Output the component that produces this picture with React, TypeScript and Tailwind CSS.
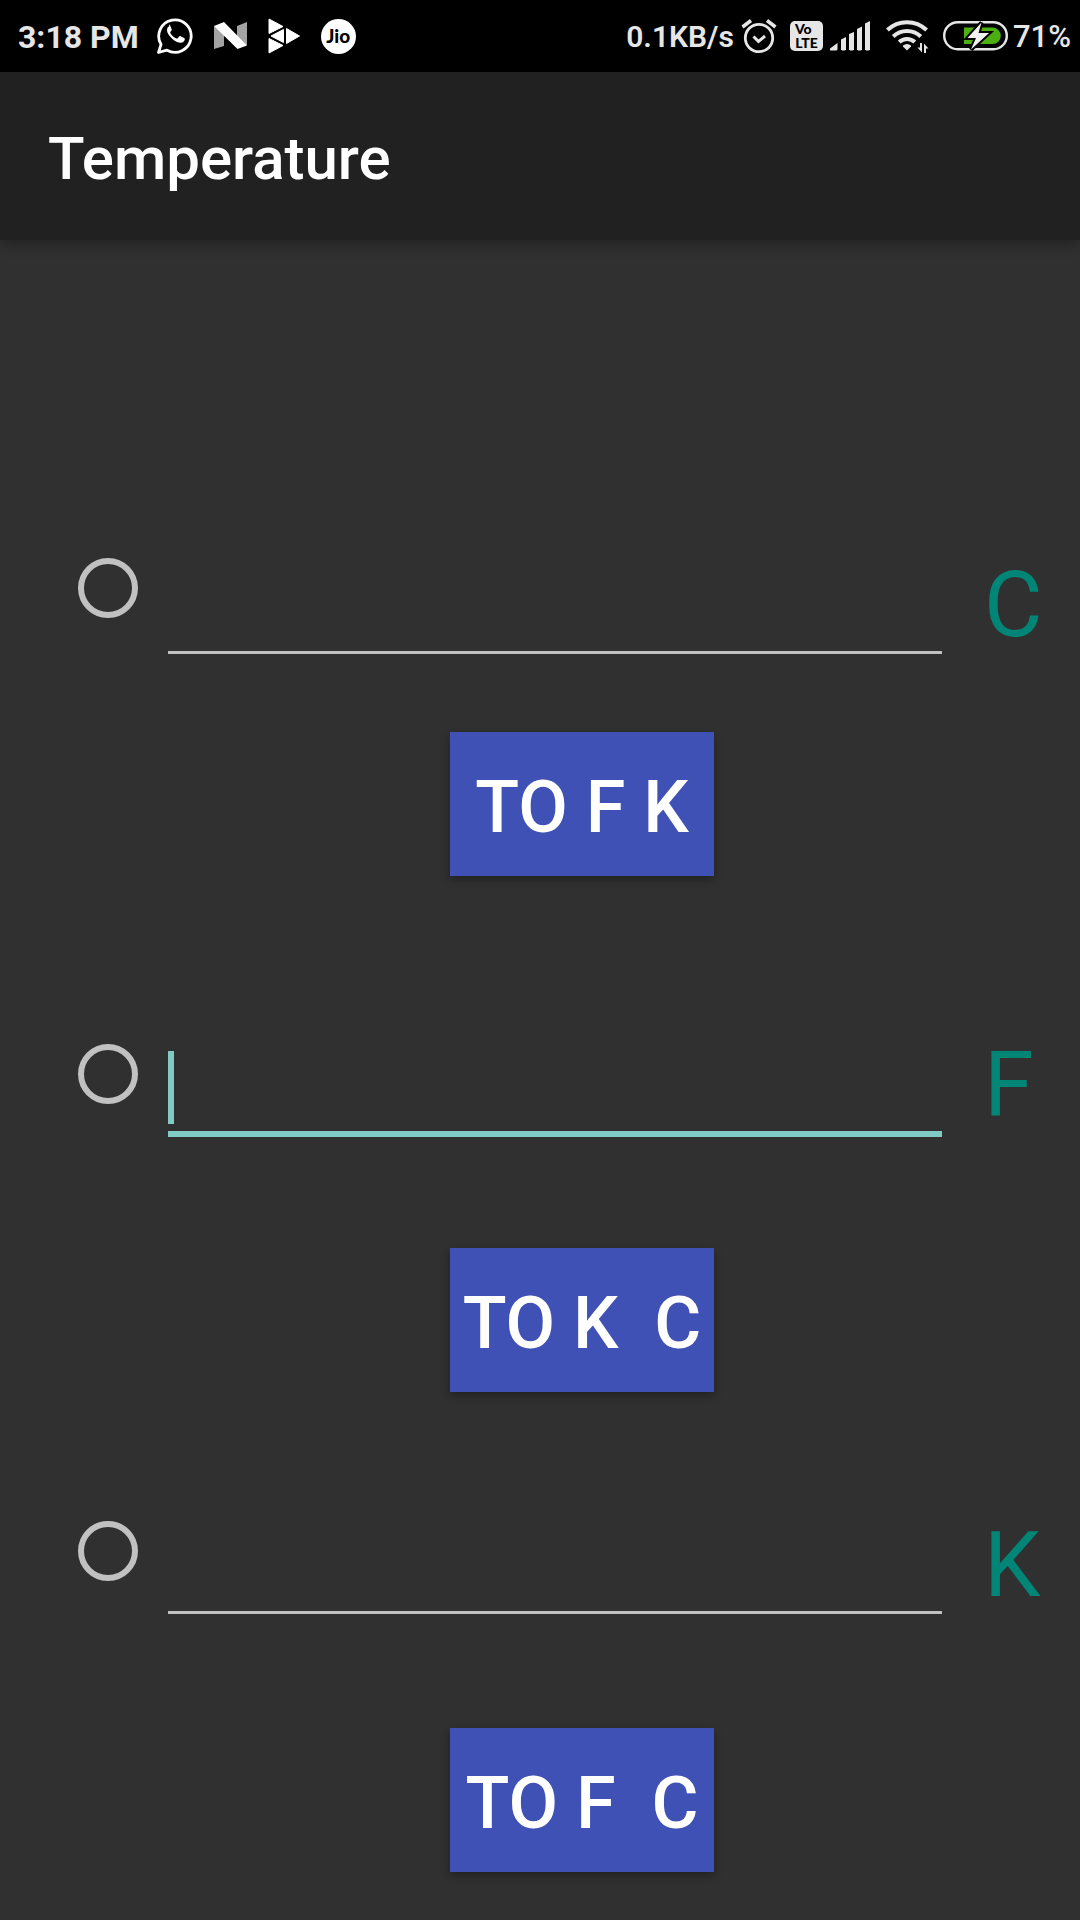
import React from "react";

function WhatsAppIcon() {
  return (
    <svg viewBox="0 0 38 38" className="h-[38px] w-[38px] shrink-0" aria-hidden="true">
      <path d="M2.500 35.500 5 27.300A16.200 16.200 0 1 1 11 33.200Z" fill="none" stroke="#fff" strokeWidth="2.800" strokeLinejoin="round" />
      <path
        d="M12.300 10.200c-1.200.3-2.300 2-2.300 4 0 3 2.200 6.200 5.400 9.200 3 2.600 6.200 4.100 9 4.100 2.500 0 4-1.600 4.300-3.400.1-.8 0-1.100-.7-1.500l-3.800-1.900c-.7-.3-1-.2-1.500.4l-1.400 1.800c-.4.4-.8.5-1.400.2-2.900-1.300-4.900-3.100-6.400-5.700-.3-.6-.2-.9.200-1.400l1.100-1.400c.3-.4.3-.8.100-1.300l-1.600-3.900c-.3-.7-.5-.9-1-.9Z"
        transform="translate(1.500 -.500) scale(.95)"
        fill="#fff"
      />
    </svg>
  );
}

function NougatIcon() {
  return (
    <svg viewBox="0 0 34 28" className="h-[28px] w-[34px] shrink-0" aria-hidden="true">
      <path d="M0 4 10 11v13L0 27Z" fill="#a3a3a3" />
      <path d="M23 4 33 0v23l-10 2Z" fill="#a3a3a3" />
      <path d="M0 4 10 0 33 23.500 23.500 27Z" fill="#fff" />
    </svg>
  );
}

function PlayIcon() {
  return (
    <svg viewBox="0 0 32 36" className="h-[36px] w-[32px] shrink-0" aria-hidden="true">
      <g fill="#fff" stroke="#fff" strokeLinejoin="round">
        <path d="M1 1 15 8.500 1 15.500Z" />
        <path d="M3 18 15.500 11.500v13Z" />
        <path d="M18.500 10.500 31.500 18l-13 7.500Z" />
        <path d="M1 20.500 15 27.500 1 35Z" />
      </g>
    </svg>
  );
}

function AlarmIcon() {
  return (
    <svg viewBox="0 0 36 36" className="h-[36px] w-[36px] shrink-0" aria-hidden="true">
      <g fill="none" stroke="#e6e6e6">
        <circle cx="18" cy="20" r="13.700" strokeWidth="2.800" />
        <path d="m12.500 18.500 5 5 6.500-5.500" strokeWidth="3" />
        <path d="m1.500 9 8.500-6.500M34.500 9l-8.500-6.500" strokeWidth="3.500" />
      </g>
    </svg>
  );
}

function SignalIcon() {
  return (
    <svg viewBox="0 0 40 30" className="h-[30px] w-[40px] shrink-0" aria-hidden="true">
      <g fill="#e6e6e6">
        <path d="M0 29.500V27.500L7.500 22v6.500l-1 1Z" />
        <path d="M11 18.500 16 16v12.500l-1 1h-3l-1-1Z" />
        <path d="M19 13 24 11v17.500l-1 1h-3l-1-1Z" />
        <path d="M27 8 32 5.500v23l-1 1h-3l-1-1Z" />
        <path d="M35 2.500 40 0v28.500l-1 1h-3l-1-1Z" />
      </g>
    </svg>
  );
}

function WifiIcon() {
  return (
    <svg viewBox="0 0 43 34" className="h-[34px] w-[43px] shrink-0" aria-hidden="true">
      <g fill="none" stroke="#e6e6e6" strokeWidth="4">
        <path d="M1.400 11a28.500 28.500 0 0 1 39.200 0" />
        <path d="M7.200 17.500a20 20 0 0 1 27.600 0" />
        <path d="M13.200 23a11.500 11.500 0 0 1 15.600 0" />
      </g>
      <path d="M17 26.500q4-3 8 0v1L21 31.500l-4-4Z" fill="#e6e6e6" />
      <path d="M36 24v9.500L31.500 28.500H34V24ZM38 34v-9.500L42.500 29.500H40V34Z" fill="#e6e6e6" />
    </svg>
  );
}

function BatteryIcon() {
  return (
    <svg viewBox="0 0 66 32" className="h-[32px] w-[66px] shrink-0" aria-hidden="true">
      <rect x="1.200" y="2.200" width="62.600" height="27" rx="13.500" fill="none" stroke="#e6e6e6" strokeWidth="2.400" />
      <path d="M21 7.500H49.500a8.300 8.300 0 0 1 0 16.600H21Z" fill="#4caf10" />
      <path
        d="M38.500 2.500 24.500 18h8.500l-5 11.500L46 13H35.500Z"
        fill="#f2f2f2"
        stroke="#000"
        strokeWidth="4"
        paintOrder="stroke"
      />
    </svg>
  );
}

function StatusBar() {
  return (
    <div className="flex h-[72px] items-center justify-between bg-black pr-[9px] pl-[18px] text-[#e6e6e6]">
      <div className="flex items-center">
        <span className="pt-[2px] text-[32px] leading-[38px] font-bold">3:18 PM</span>
        <div className="ml-[17px] flex items-center gap-[20px]">
          <WhatsAppIcon />
          <NougatIcon />
          <PlayIcon />
          <span className="ml-px flex h-[35px] w-[35px] items-center justify-center rounded-full bg-white font-[Lato] text-[19px] leading-[20px] font-black text-black">
            Jio
          </span>
        </div>
      </div>
      <div className="flex items-center">
        <span className="pt-[2px] text-[30px] leading-[38px] font-semibold">0.1KB/s</span>
        <div className="mr-[4px] ml-[7px] flex items-center">
          <AlarmIcon />
          <span className="mr-[7px] ml-[13px] flex h-[30px] w-[33px] flex-col items-center justify-center rounded-[5px] bg-[#e6e6e6] font-[Lato] text-[14px] leading-[14px] font-black text-black">
            <span className="self-start pl-[5px]">Vo</span>
            <span>LTE</span>
          </span>
          <SignalIcon />
          <div className="ml-[16px] flex items-center gap-[14px]">
            <WifiIcon />
            <BatteryIcon />
          </div>
        </div>
        <span className="pt-[2px] text-[31px] leading-[38px] font-medium">71%</span>
      </div>
    </div>
  );
}

interface UnitProps {
  id: string;
  unit: string;
  name: string;
  action: string;
  active?: boolean;
  radioClass: string;
  buttonClass: string;
}

function UnitSection({ id, unit, name, action, active, radioClass, buttonClass }: UnitProps) {
  return (
    <section>
      <div className="flex items-start pl-[78px]">
        <input
          type="radio"
          name="unit"
          aria-label={name}
          className={`h-[60px] w-[60px] shrink-0 appearance-none rounded-full border-[6px] border-[#c1c1c1] checked:border-[#80cbc4] ${radioClass}`}
        />
        <div className="relative ml-[30px] min-w-0 flex-1">
          <input
            id={id}
            type="text"
            inputMode="decimal"
            className={
              active
                ? "block h-[105px] w-full border-b-[6px] border-[#80cbc4] bg-transparent text-[60px] text-white caret-transparent outline-none"
                : "block h-[102px] w-full border-b-[3px] border-[#c1c1c1] bg-transparent text-[60px] text-white outline-none"
            }
          />
          {active && <span className="absolute top-[19px] left-0 h-[73px] w-[6px] bg-[#80cbc4]" />}
        </div>
        <label htmlFor={id} className="ml-[42px] w-[96px] shrink-0 text-[90px] leading-[108px] text-[#008577]">
          {unit}
        </label>
      </div>
      <div className={`flex justify-center pl-[84px] ${buttonClass}`}>
        <button
          type="button"
          className="h-[144px] w-[264px] bg-[#3f51b5] pt-[8px] text-[72px] leading-[84px] font-medium whitespace-pre text-white shadow-[0_4px_8px_rgba(0,0,0,0.3)]"
        >
          {action}
        </button>
      </div>
    </section>
  );
}

export default function App() {
  return (
    <div className="flex min-h-screen flex-col bg-[#303030] font-[Roboto,sans-serif]">
      <StatusBar />
      <header className="flex h-[168px] items-center bg-[#212121] px-[48px] pt-[6px] shadow-[0_4px_12px_rgba(0,0,0,0.3)]">
        <h1 className="text-[60px] leading-[70px] font-medium text-white">Temperature</h1>
      </header>
      <main className="pt-[312px] pb-[48px]">
        <UnitSection id="celsius" unit="C" name="Celsius" action="TO F K" radioClass="mt-[6px]" buttonClass="mt-[72px] mb-[156px]" />
        <UnitSection id="fahrenheit" unit="F" name="Fahrenheit" action="TO K  C" active radioClass="mt-[12px]" buttonClass="mt-[108px] mb-[120px]" />
        <UnitSection id="kelvin" unit="K" name="Kelvin" action="TO F  C" radioClass="mt-[9px]" buttonClass="mt-[108px]" />
      </main>
    </div>
  );
}
